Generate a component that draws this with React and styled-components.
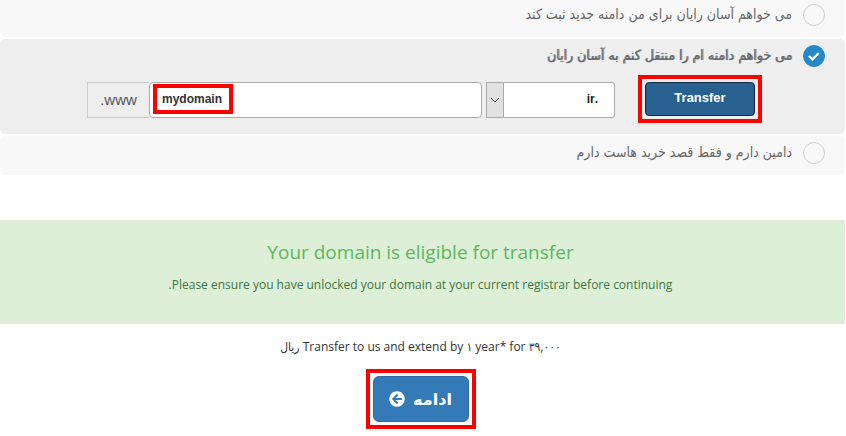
import React, { useState } from 'react';
import styled, { createGlobalStyle } from 'styled-components';
import { FaArrowCircleLeft } from 'react-icons/fa';

const App = () => {
  const [selected, setSelected] = useState('transfer');
  const [domain, setDomain] = useState('mydomain');

  const renderOption = (value, text) => (
    <OptionLabel $active={selected === value}>
      <RadioWrap>
        <Radio
          type="radio"
          name="domainOption"
          value={value}
          checked={selected === value}
          onChange={() => setSelected(value)}
        />
        {selected === value && (
          <CheckMark viewBox="0 0 22 22" aria-hidden="true">
            <path d="M6 11 L9.5 14.3 L15.8 8" />
          </CheckMark>
        )}
      </RadioWrap>
      <span>{text}</span>
    </OptionLabel>
  );

  return (
    <>
      <GlobalStyle />
      <Page dir="rtl">
        <OptionList>
          <Option $first>
            {renderOption(
              'register',
              'می خواهم آسان رایان برای من دامنه جدید ثبت کند'
            )}
          </Option>
          <Option $active>
            {renderOption(
              'transfer',
              'می خواهم دامنه ام را منتقل کنم به آسان رایان'
            )}
            <DomainForm onSubmit={(e) => e.preventDefault()}>
              <Marked>
                <TransferButton type="submit">Transfer</TransferButton>
              </Marked>
              <SelectWrap>
                <TldSelect aria-label="پسوند دامنه" defaultValue=".ir">
                  <option value=".ir">.ir</option>
                </TldSelect>
                <SelectArrow>
                  <svg viewBox="0 0 10 6" width="10" height="6">
                    <path d="M1 1 L5 5 L9 1" />
                  </svg>
                </SelectArrow>
              </SelectWrap>
              <InputGroup>
                <DomainInput
                  id="domain"
                  type="text"
                  dir="ltr"
                  value={domain}
                  onChange={(e) => setDomain(e.target.value)}
                />
                <InputMark />
              </InputGroup>
              <Prefix htmlFor="domain">www.</Prefix>
            </DomainForm>
          </Option>
          <Option>
            {renderOption('own', 'دامین دارم و فقط قصد خرید هاست دارم')}
          </Option>
        </OptionList>

        <Notice>
          <h2>Your domain is eligible for transfer</h2>
          <p>
            Please ensure you have unlocked your domain at your current
            registrar before continuing.
          </p>
        </Notice>

        <PriceText>
          Transfer to us and extend by ۱ year* for ۳۹,۰۰۰ ریال
        </PriceText>

        <Actions>
          <Marked>
            <ContinueButton type="button">
              ادامه
              <FaArrowCircleLeft size={16} />
            </ContinueButton>
          </Marked>
        </Actions>
      </Page>
    </>
  );
};

export default App;

const GlobalStyle = createGlobalStyle`
  * {
    box-sizing: border-box;
  }
  body {
    margin: 0;
    background: #fff;
    color: #333;
    font-family: 'Open Sans', 'DejaVu Sans Condensed', 'DejaVu Sans', sans-serif;
    font-size: 12px;
  }
  button, input, select {
    font-family: 'Liberation Sans', Arial, sans-serif;
  }
`;

const Page = styled.main`
  padding: 0 1px 14px 0;
`;

const OptionList = styled.div`
  display: flex;
  flex-direction: column;
  gap: 2px;
`;

const Option = styled.div`
  padding: ${({ $first }) => ($first ? '4px' : '6px')} 20px
    ${({ $active }) => ($active ? '16px' : '11px')} 0;
  border-radius: ${({ $first }) => ($first ? '0 0 5px 5px' : '5px')};
  background: ${({ $active }) => ($active ? '#eee' : '#f8f8f8')};
`;

const OptionLabel = styled.label`
  display: flex;
  align-items: center;
  gap: 11px;
  height: 22px;
  color: #666;
  font-family: 'DejaVu Sans Condensed', 'DejaVu Sans', sans-serif;
  font-size: 14px;
  line-height: 20px;
  text-shadow: ${({ $active }) => ($active ? '1px 0 #888' : 'none')};
  cursor: pointer;
  > span:last-child {
    padding-bottom: 2px;
  }
`;

const RadioWrap = styled.span`
  position: relative;
  width: 22px;
  height: 22px;
`;

const Radio = styled.input`
  appearance: none;
  display: block;
  width: 22px;
  height: 22px;
  margin: 0;
  border: 1px solid #d0d0d0;
  border-radius: 50%;
  background: #f8f8f8;
  cursor: pointer;
  &:checked {
    border-color: #2489c5;
    background: #2489c5;
  }
`;

const CheckMark = styled.svg`
  position: absolute;
  inset: 0;
  pointer-events: none;
  fill: none;
  stroke: #fff;
  stroke-width: 2.4;
`;

const DomainForm = styled.form`
  display: flex;
  align-items: flex-start;
  padding: 15px 70px 0 87px;
`;

const Marked = styled.div`
  position: relative;
  display: inline-block;
  &::after {
    content: '';
    position: absolute;
    inset: -7px;
    border: 4px solid #fe0000;
    pointer-events: none;
  }
`;

const TransferButton = styled.button`
  display: block;
  width: 110px;
  height: 34px;
  padding: 0 0 4px;
  border: 1px solid #122b40;
  border-radius: 4px;
  background: #286090;
  color: #fff;
  font-size: 13px;
  font-weight: bold;
  cursor: pointer;
`;

const SelectWrap = styled.div`
  position: relative;
  width: 129px;
  margin: 0 30px 0 4px;
`;

const TldSelect = styled.select`
  appearance: none;
  display: block;
  width: 100%;
  height: 36px;
  padding: 0 16px 2px 24px;
  border: 1px solid #aaa;
  border-radius: 3px;
  background: #fff;
  color: #222;
  font-size: 12px;
  font-weight: bold;
`;

const SelectArrow = styled.span`
  position: absolute;
  top: 0;
  left: 0;
  display: flex;
  align-items: center;
  justify-content: center;
  width: 18px;
  height: 36px;
  border: 1px solid #aaa;
  background: #e1e1e1;
  pointer-events: none;
  path {
    fill: none;
    stroke: #444;
  }
`;

const InputGroup = styled.div`
  position: relative;
  flex: 1;
`;

const DomainInput = styled.input`
  display: block;
  width: 100%;
  height: 36px;
  padding: 0 12px 2px;
  border: 1px solid #aaa;
  border-radius: 4px;
  background: #fff;
  color: #333;
  font-size: 12px;
  font-weight: bold;
`;

const InputMark = styled.span`
  position: absolute;
  top: 2px;
  left: 4px;
  width: 80px;
  height: 30px;
  border: 4px solid #fe0000;
  pointer-events: none;
`;

const Prefix = styled.label`
  width: 62px;
  height: 36px;
  border: 1px solid #ccc;
  border-right: 0;
  background: #eee;
  color: #555;
  font-family: 'Liberation Sans', Arial, sans-serif;
  font-size: 15px;
  line-height: 34px;
  text-align: center;
`;

const Notice = styled.section`
  margin: 45px 0 0;
  padding: 18px 4px 29px 0;
  background: #deefd8;
  text-align: center;
  h2 {
    margin: 0;
    color: #5cb85c;
    font-size: 19px;
    font-weight: normal;
    line-height: 28px;
  }
  p {
    margin: 9px 0 0;
    color: #3c763d;
    font-size: 12px;
    line-height: 20px;
  }
`;

const PriceText = styled.p`
  margin: 13px 4px 0 0;
  line-height: 20px;
  text-align: center;
`;

const Actions = styled.div`
  display: flex;
  justify-content: center;
  margin: 19px 4px 0 0;
`;

const ContinueButton = styled.button`
  display: flex;
  align-items: center;
  justify-content: center;
  gap: 8px;
  width: 96px;
  height: 46px;
  padding: 0;
  border: 1px solid #2e6da4;
  border-radius: 6px;
  background: #337ab7;
  color: #fff;
  font-family: 'DejaVu Sans', sans-serif;
  font-size: 16px;
  font-weight: bold;
  cursor: pointer;
`;
